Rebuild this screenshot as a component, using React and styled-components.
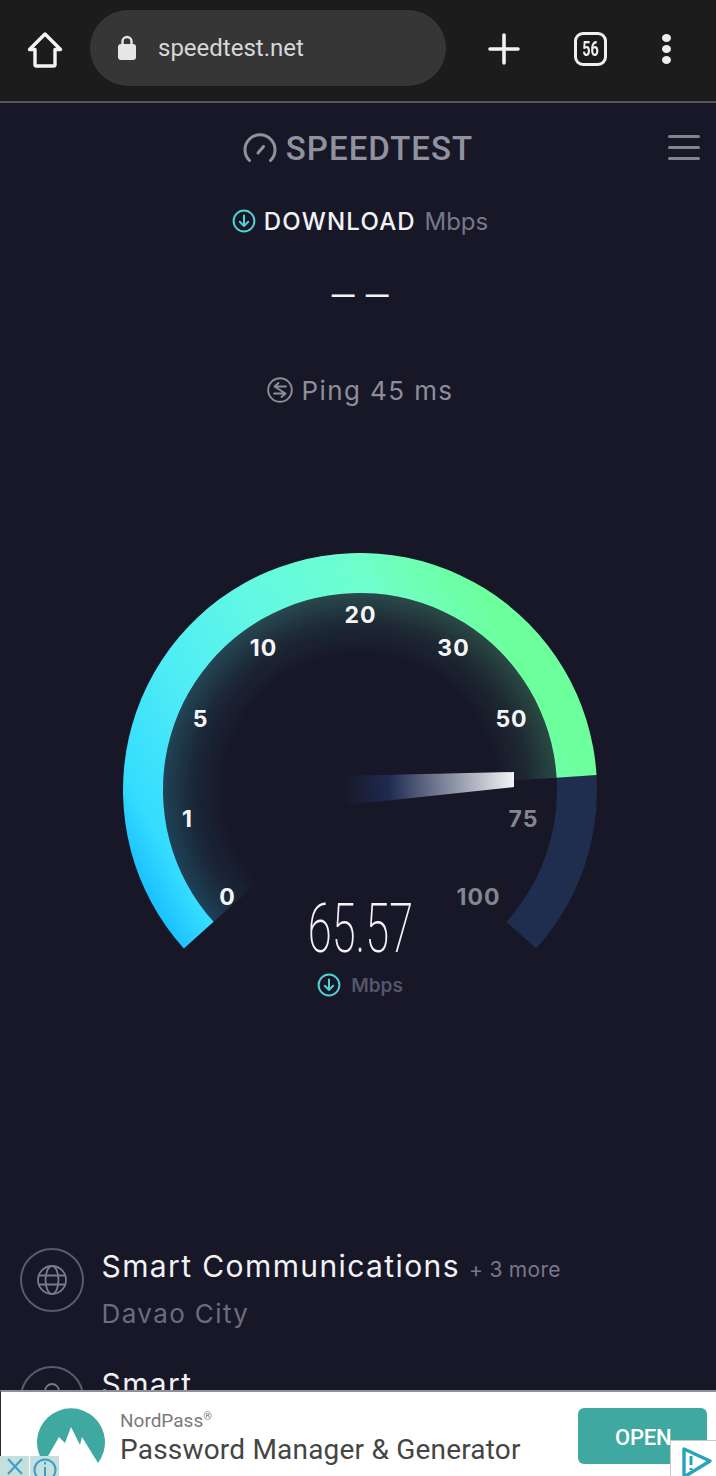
import React from 'react';
import styled, { createGlobalStyle } from 'styled-components';

const GlobalStyle = createGlobalStyle`
  html, body {
    margin: 0;
    padding: 0;
    background: #171728;
  }
  * { box-sizing: border-box; }
`;

const Page = styled.div`
  position: relative;
  width: 716px;
  height: 1476px;
  overflow: hidden;
  background: #171728;
  font-family: Inter, 'Noto Sans', sans-serif;
  display: flex;
  flex-direction: column;
`;

const BrowserBar = styled.header`
  height: 103px;
  flex: none;
  background: #1c1c1c;
  border-bottom: 2px solid #55555a;
  display: flex;
  align-items: flex-start;
  padding: 10px 0 0 26px;
`;

const BarIcon = styled.svg`
  display: block;
  flex: none;
  margin-top: ${(p) => p.$top || 0}px;
  margin-left: ${(p) => p.$left || 0}px;
`;

const UrlPill = styled.div`
  width: 356px;
  height: 76px;
  margin-left: 26px;
  border-radius: 38px;
  background: #363636;
  display: flex;
  align-items: center;
  padding: 0 0 0 27px;
  gap: 21px;
`;

const UrlText = styled.span`
  font-family: Roboto, sans-serif;
  font-size: 24px;
  color: #d8d8d8;
`;

const TabCount = styled.div`
  width: 33px;
  height: 34px;
  margin: 22px 0 0 54px;
  border: 3.5px solid #f0f0f0;
  border-radius: 9px;
  display: flex;
  align-items: center;
  justify-content: center;
  font-family: Roboto, sans-serif;
  font-weight: 700;
  font-size: 20px;
  color: #f0f0f0;
  span {
    display: block;
    transform: scaleX(0.72);
  }
`;

const Dots = styled.div`
  display: flex;
  flex-direction: column;
  gap: 3px;
  margin: 24px 0 0 55px;
  span {
    display: block;
    width: 9px;
    height: 8px;
    border-radius: 50%;
    background: #ededed;
  }
`;

const CenterColumn = styled.main`
  padding-left: 4px;
  display: flex;
  flex-direction: column;
  align-items: center;
`;

const LogoRow = styled.div`
  position: relative;
  width: 100%;
  height: 90px;
  display: flex;
  justify-content: center;
  align-items: center;
  padding-right: 4px;
  gap: 9px;
`;

const LogoText = styled.span`
  font-family: Roboto, sans-serif;
  font-weight: 500;
  font-size: 33px;
  letter-spacing: 1.05px;
  color: #92929f;
  line-height: 1;
`;

const Hamburger = styled.div`
  position: absolute;
  right: 16px;
  top: 32px;
  width: 32px;
  display: flex;
  flex-direction: column;
  gap: 8px;
  span {
    display: block;
    height: 3px;
    background: #84848f;
    border-radius: 2px;
  }
`;

const TestLabel = styled.div`
  display: flex;
  align-items: center;
  gap: 8px;
  height: 36px;
  margin-top: 10px;
  font-size: 24px;
  font-weight: 500;
  letter-spacing: 1.2px;
  color: #f2f2f5;
  span {
    color: #77778a;
    font-weight: 400;
    letter-spacing: 0;
    margin-left: 1px;
  }
`;

const Dashes = styled.div`
  margin-top: 40px;
  height: 36px;
  font-family: Roboto, sans-serif;
  font-size: 35px;
  line-height: 36px;
  font-weight: 400;
  word-spacing: -2px;
  color: #f2f2f5;
`;

const Ping = styled.div`
  display: flex;
  align-items: center;
  gap: 9px;
  margin-top: 57px;
  height: 36px;
  font-size: 26px;
  letter-spacing: 1.4px;
  color: #8e8e9b;
`;

const Gauge = styled.div`
  position: relative;
  width: 504px;
  height: 460px;
  margin-top: 132px;
`;

const Dial = styled.svg`
  display: block;
`;

const Tick = styled.text`
  font-family: Inter, sans-serif;
  font-weight: 700;
  font-size: 23px;
  letter-spacing: 1px;
  fill: ${(p) => (p.$dim ? '#85858f' : '#f6f6f8')};
  text-anchor: middle;
`;

const Readout = styled.div`
  position: absolute;
  left: 0;
  right: 0;
  top: 351px;
  display: flex;
  flex-direction: column;
  align-items: center;
`;

const Value = styled.div`
  font-family: Roboto, sans-serif;
  font-weight: 200;
  font-size: 68px;
  line-height: 76px;
  color: #f4f4f6;
  transform: scaleX(0.64);
`;

const Unit = styled.div`
  display: flex;
  align-items: center;
  gap: 10px;
  margin-top: 6px;
  font-size: 19px;
  font-weight: 600;
  color: #55556a;
`;

const ServerList = styled.section`
  display: flex;
  flex-direction: column;
  gap: 34px;
  padding: 0 0 0 20px;
  margin-top: 248px;
`;

const Server = styled.div`
  display: flex;
  gap: 18px;
`;

const ServerIcon = styled.div`
  width: 64px;
  height: 64px;
  flex: none;
  border: 2.5px solid #5a5a6e;
  border-radius: 50%;
  display: flex;
  align-items: center;
  justify-content: center;
  svg {
    margin-bottom: ${(p) => p.$lift || 0}px;
  }
`;

const ServerText = styled.div`
  display: flex;
  flex-direction: column;
  margin-left: -0.5px;
`;

const ServerName = styled.div`
  font-size: 30px;
  line-height: 36px;
  letter-spacing: 1.4px;
  color: #f2f2f5;
  small {
    font-size: 21px;
    letter-spacing: 0.3px;
    color: #77778a;
    margin-left: 9px;
  }
`;

const ServerPlace = styled.div`
  font-size: 26px;
  line-height: 36px;
  margin-top: 8px;
  letter-spacing: 1.4px;
  color: #6c6c7e;
`;

const AdBanner = styled.aside`
  position: absolute;
  left: 0;
  right: 0;
  bottom: 0;
  height: 86px;
  background: #fff;
  border-top: 2px solid #8f8f98;
  border-left: 1px solid #2a2a2a;
  display: flex;
  align-items: flex-start;
  padding: 14px 9px 0 36px;
`;

const AdLogo = styled.svg`
  display: block;
  flex: none;
  margin-top: 2px;
`;

const AdText = styled.div`
  flex: 1;
  margin-left: 15px;
  padding-top: 3px;
  font-family: Roboto, sans-serif;
  display: flex;
  flex-direction: column;
`;

const AdBrand = styled.div`
  font-size: 19px;
  line-height: 24px;
  color: #7a7a7a;
  sup {
    font-size: 11px;
    line-height: 0;
  }
`;

const AdTitle = styled.div`
  font-size: 28px;
  line-height: 34px;
  letter-spacing: 0.2px;
  color: #454545;
`;

const AdButton = styled.div`
  width: 129px;
  height: 56px;
  margin-top: 2px;
  padding: 2px 0 0 37px;
  border-radius: 6px;
  background: #3fa8a1;
  display: flex;
  align-items: center;
  font-family: Roboto, sans-serif;
  font-size: 22px;
  font-weight: 500;
  letter-spacing: -0.2px;
  color: #fff;
`;

const AdControls = styled.div`
  position: absolute;
  left: -1px;
  bottom: 0;
  display: flex;
  gap: 1px;
`;

const AdControl = styled.div`
  width: 29px;
  height: 20px;
  background: #c5dede;
  display: flex;
  align-items: flex-start;
  justify-content: center;
  overflow: hidden;
`;

const AdChoice = styled.div`
  position: absolute;
  right: 0;
  bottom: 0;
  width: 46px;
  height: 36px;
  background: #fff;
  border-left: 1px solid #c8c8c8;
  border-top: 1px solid #c8c8c8;
  display: flex;
  padding: 6px 0 0 9px;
`;

// gauge centre inside the 504 wide dial box
const CX = 252;
const CY = 250;

const polar = (r, deg) => {
  const a = (deg * Math.PI) / 180;
  return [CX + r * Math.cos(a), CY + r * Math.sin(a)];
};

const sector = (r0, r1, a0, a1) => {
  const [x0, y0] = polar(r1, a0);
  const [x1, y1] = polar(r1, a1);
  const [x2, y2] = polar(r0, a1);
  const [x3, y3] = polar(r0, a0);
  const large = a1 - a0 > 180 ? 1 : 0;
  return `M${x0} ${y0}A${r1} ${r1} 0 ${large} 1 ${x1} ${y1}L${x2} ${y2}A${r0} ${r0} 0 ${large} 0 ${x3} ${y3}Z`;
};

const ticks = [
  { label: '0', x: 227, y: 896 },
  { label: '1', x: 187, y: 818 },
  { label: '5', x: 200, y: 718 },
  { label: '10', x: 263, y: 647 },
  { label: '20', x: 360, y: 614 },
  { label: '30', x: 453, y: 647 },
  { label: '50', x: 511, y: 718 },
  { label: '75', x: 523, y: 818, dim: true },
  { label: '100', x: 478, y: 896, dim: true },
];

function DownIcon() {
  return (
    <svg width="24" height="24" viewBox="0 0 24 24" fill="none" stroke="#4fd3d2" strokeWidth="2" strokeLinecap="round" strokeLinejoin="round">
      <circle cx="12" cy="12" r="10.4" />
      <path d="M12 6.5v10.5M7.8 12.8 12 17l4.2-4.2" />
    </svg>
  );
}

export default function App() {
  const startAngle = 138;
  const fillAngle = 356.4;
  const endAngle = 402;

  return (
    <Page>
      <GlobalStyle />
      <BrowserBar>
        <BarIcon $top={21} width="38" height="38" viewBox="0 0 38 38" fill="none" stroke="#f4f4f4" strokeWidth="3.4" strokeLinejoin="round" strokeLinecap="round">
          <path d="M19 3 3.5 18.5H9V33.5a1.5 1.5 0 0 0 1.5 1.5h17a1.5 1.5 0 0 0 1.5-1.5V18.5h5.5Z" />
        </BarIcon>
        <UrlPill>
          <svg width="20" height="26" viewBox="0 0 20 26" fill="none">
            <path d="M5.5 10V6.5a4.5 4.5 0 0 1 9 0V10" stroke="#e6e6e6" strokeWidth="2.4" />
            <rect x="1" y="9" width="18" height="16" rx="3" fill="#e6e6e6" />
          </svg>
          <UrlText>speedtest.net</UrlText>
        </UrlPill>
        <BarIcon $top={23} $left={42} width="32" height="32" viewBox="0 0 32 32" stroke="#f2f2f2" strokeWidth="3.6" strokeLinecap="round">
          <path d="M16 2v28M2 16h28" />
        </BarIcon>
        <TabCount>
          <span>56</span>
        </TabCount>
        <Dots>
          <span />
          <span />
          <span />
        </Dots>
      </BrowserBar>

      <CenterColumn>
        <LogoRow>
          <svg width="34" height="30" viewBox="0 0 34 30" fill="none" stroke="#92929f" strokeWidth="3" strokeLinecap="round">
            <path d="M6.5 27.5a15 15 0 1 1 21 0" />
            <path d="M15 20 20.5 13.5" />
          </svg>
          <LogoText>SPEEDTEST</LogoText>
          <Hamburger>
            <span />
            <span />
            <span />
          </Hamburger>
        </LogoRow>

        <TestLabel>
          <DownIcon />
          <div>
            DOWNLOAD <span>Mbps</span>
          </div>
        </TestLabel>

        <Dashes>— —</Dashes>

        <Ping>
          <svg width="26" height="26" viewBox="0 0 26 26" fill="none" stroke="#8e8e9b" strokeWidth="1.9" strokeLinecap="round" strokeLinejoin="round">
            <circle cx="13" cy="13" r="11.8" />
            <path d="M19 9.5H7.5l4-3.5M7 16.5h11.5l-4 3.5M7.5 9.5 18.5 16.5" />
          </svg>
          Ping 45 ms
        </Ping>

        <Gauge>
          <Dial width="504" height="460" viewBox="0 0 504 460" fill="none">
            <defs>
              <linearGradient id="arcFill" gradientUnits="userSpaceOnUse" x1="42" y1="410" x2="492" y2="160">
                <stop offset="0" stopColor="#08aeff" />
                <stop offset="0.12" stopColor="#35dcff" />
                <stop offset="0.3" stopColor="#4fecf5" />
                <stop offset="0.5" stopColor="#62f8e4" />
                <stop offset="0.72" stopColor="#6fffcc" />
                <stop offset="0.9" stopColor="#6dff9c" />
              </linearGradient>
              <radialGradient id="glowFade" gradientUnits="userSpaceOnUse" cx={CX} cy={CY} r="197">
                <stop offset="0.68" stopColor="#fff" stopOpacity="0" />
                <stop offset="0.85" stopColor="#fff" stopOpacity="0.08" />
                <stop offset="1" stopColor="#fff" stopOpacity="0.22" />
              </radialGradient>
              <mask id="glowMask" maskUnits="userSpaceOnUse" x="0" y="0" width="504" height="460">
                <rect width="504" height="460" fill="url(#glowFade)" />
              </mask>
              <linearGradient id="needleFill" gradientUnits="userSpaceOnUse" x1="232" y1="250" x2="406" y2="240">
                <stop offset="0.02" stopColor="#1f2a50" stopOpacity="0" />
                <stop offset="0.28" stopColor="#1f2a50" />
                <stop offset="1" stopColor="#f4f4f6" />
              </linearGradient>
            </defs>
            <path d={sector(197, 237, fillAngle, endAngle)} fill="#1f2e4f" />
            <path d={sector(110, 197, startAngle, fillAngle)} fill="url(#arcFill)" mask="url(#glowMask)" />
            <path d={sector(197, 237, startAngle, fillAngle)} fill="url(#arcFill)" />
            <polygon points="232,236 406,232 406,247 238,265" fill="url(#needleFill)" />
            {ticks.map((t) => (
              <Tick key={t.label} $dim={t.dim} x={t.x - 107.5} y={t.y - 540 + 9}>
                {t.label}
              </Tick>
            ))}
          </Dial>
          <Readout>
            <Value>65.57</Value>
            <Unit>
              <DownIcon />
              Mbps
            </Unit>
          </Readout>
        </Gauge>
      </CenterColumn>

      <AdBanner>
        <AdLogo width="68" height="56" viewBox="0 0 68 56">
          <path d="M61 55A34 34 0 1 0 7 55L22 29 28 35 34 19 43 37 45 29Z" fill="#3fa8a1" />
        </AdLogo>
        <AdText>
          <AdBrand>
            NordPass<sup>®</sup>
          </AdBrand>
          <AdTitle>Password Manager &amp; Generator</AdTitle>
        </AdText>
        <AdButton>OPEN</AdButton>
        <AdControls>
          <AdControl>
            <svg width="20" height="20" viewBox="0 0 20 20" stroke="#3d9fc4" strokeWidth="2" fill="none">
              <path d="M3 3 17 18M17 3 3 18" />
            </svg>
          </AdControl>
          <AdControl>
            <svg width="24" height="24" viewBox="0 0 24 24" stroke="#3d9fc4" strokeWidth="2" fill="none">
              <circle cx="12" cy="14" r="10.5" />
              <path d="M12 11v9M12 6v2.5" />
            </svg>
          </AdControl>
        </AdControls>
        <AdChoice>
          <svg width="32" height="30" viewBox="0 0 32 30" fill="none">
            <path d="M4 2 30 14 4 30Z" stroke="#2aa3bd" strokeWidth="3.4" strokeLinejoin="round" />
            <path d="M11 9v9M11 21v2" stroke="#2aa3bd" strokeWidth="3" />
          </svg>
        </AdChoice>
      </AdBanner>

      <ServerList>
        <Server>
          <ServerIcon>
            <svg width="32" height="32" viewBox="0 0 32 32" fill="none" stroke="#7a7a8c" strokeWidth="1.8">
              <circle cx="16" cy="16" r="14" />
              <ellipse cx="16" cy="16" rx="6.5" ry="14" />
              <path d="M2 11.5h28M2 20.5h28" />
            </svg>
          </ServerIcon>
          <ServerText>
            <ServerName>
              Smart Communications<small>+ 3 more</small>
            </ServerName>
            <ServerPlace>Davao City</ServerPlace>
          </ServerText>
        </Server>
        <Server>
          <ServerIcon $lift={8}>
            <svg width="20" height="24" viewBox="0 0 20 24" fill="none" stroke="#7a7a8c" strokeWidth="1.8">
              <circle cx="10" cy="9" r="7" />
            </svg>
          </ServerIcon>
          <ServerText>
            <ServerName>Smart</ServerName>
          </ServerText>
        </Server>
      </ServerList>
    </Page>
  );
}
